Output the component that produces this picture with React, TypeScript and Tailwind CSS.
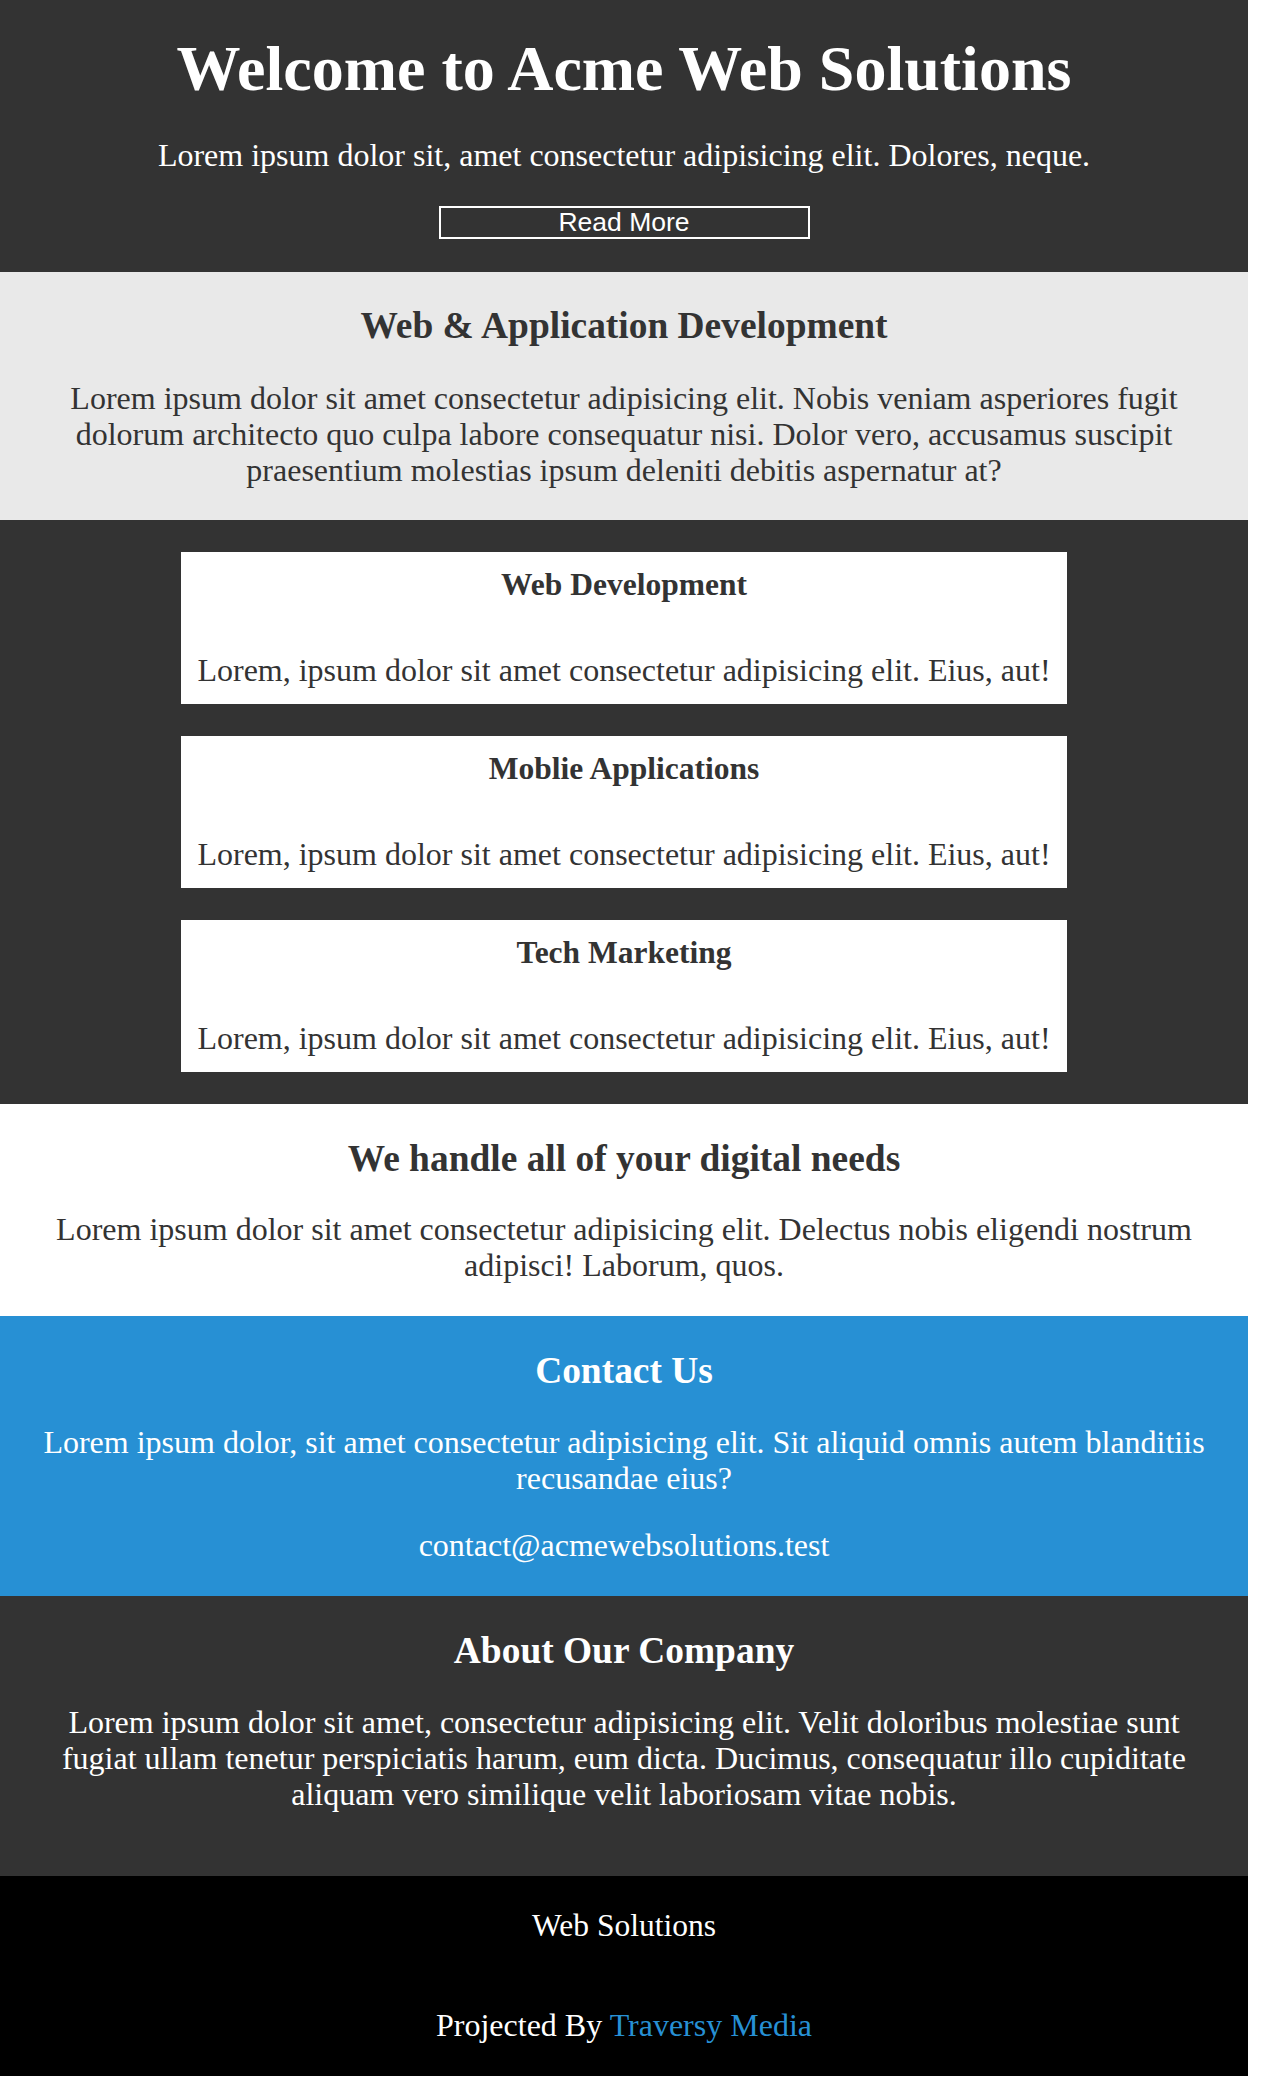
const serif = "font-['Liberation_Serif','Times_New_Roman',serif]";

const services = [
  { title: "Web Development", text: "Lorem, ipsum dolor sit amet consectetur adipisicing elit. Eius, aut!" },
  { title: "Moblie Applications", text: "Lorem, ipsum dolor sit amet consectetur adipisicing elit. Eius, aut!" },
  { title: "Tech Marketing", text: "Lorem, ipsum dolor sit amet consectetur adipisicing elit. Eius, aut!" },
];

const App = () => {
  return (
    <div className={`w-[1248px] text-center ${serif}`}>
      {/* showcase */}
      <header className="bg-[#333333] text-white pt-[33px] pb-[33px] px-8">
        <h1 className="text-[64px] leading-[72px] font-bold">Welcome to Acme Web Solutions</h1>
        <p className="mt-[32px] text-[32px] leading-[36px]">
          Lorem ipsum dolor sit, amet consectetur adipisicing elit. Dolores, neque.
        </p>
        <div className="mt-[33px] flex justify-center">
          <a
            href="#"
            className="w-[371px] h-[33px] border-2 border-white flex items-center justify-center text-[26.5px] leading-none text-white font-['Liberation_Sans',Arial,sans-serif]"
          >
            Read More
          </a>
        </div>
      </header>

      {/* intro */}
      <section className="bg-[#e9e9e9] text-[#333333] pt-[32px] pb-[32px] px-8">
        <h2 className="text-[37.44px] leading-[44px] font-bold">Web &amp; Application Development</h2>
        <p className="mt-[32px] text-[32px] leading-[36px]">
          Lorem ipsum dolor sit amet consectetur adipisicing elit. Nobis veniam asperiores fugit dolorum architecto quo
          culpa labore consequatur nisi. Dolor vero, accusamus suscipit praesentium molestias ipsum deleniti debitis
          aspernatur at?
        </p>
      </section>

      {/* services */}
      <section className="bg-[#333333] py-[32px] flex flex-col items-center gap-[32px]">
        {services.map((s) => (
          <div key={s.title} className="bg-white text-[#333333] w-fit px-4 pt-[15px] pb-[16px]">
            <h3 className="text-[31.5px] leading-[36px] font-bold">{s.title}</h3>
            <p className="mt-[49px] text-[32px] leading-[36px]">{s.text}</p>
          </div>
        ))}
      </section>

      {/* digital needs */}
      <section className="bg-white text-[#333333] pt-[33px] pb-[33px] px-8">
        <h2 className="text-[37.44px] leading-[44px] font-bold">We handle all of your digital needs</h2>
        <p className="mt-[30px] text-[32px] leading-[36px]">
          Lorem ipsum dolor sit amet consectetur adipisicing elit. Delectus nobis eligendi nostrum adipisci! Laborum,
          quos.
        </p>
      </section>

      {/* contact */}
      <section className="bg-[#2790d4] text-white pt-[33px] pb-[33px] px-8">
        <h2 className="text-[37.44px] leading-[44px] font-bold">Contact Us</h2>
        <p className="mt-[31px] text-[32px] leading-[36px]">
          Lorem ipsum dolor, sit amet consectetur adipisicing elit. Sit aliquid omnis autem blanditiis recusandae eius?
        </p>
        <p className="mt-[31px] text-[32px] leading-[36px]">contact@acmewebsolutions.test</p>
      </section>

      {/* about */}
      <section className="bg-[#333333] text-white pt-[33px] pb-[64px] px-8">
        <h2 className="text-[37.44px] leading-[44px] font-bold">About Our Company</h2>
        <p className="mt-[31px] text-[32px] leading-[36px]">
          Lorem ipsum dolor sit amet, consectetur adipisicing elit. Velit doloribus molestiae sunt fugiat ullam tenetur
          perspiciatis harum, eum dicta. Ducimus, consequatur illo cupiditate aliquam vero similique velit laboriosam
          vitae nobis.
        </p>
      </section>

      {/* footer */}
      <footer className="bg-black text-white pt-[32px] pb-[33px] px-8">
        <p className="text-[31.5px] leading-[36px]">Web Solutions</p>
        <p className="mt-[63px] text-[32px] leading-[36px]">
          Projected By <a href="#" className="text-[#2790d4]">Traversy Media</a>
        </p>
      </footer>
    </div>
  );
};

export default App;
